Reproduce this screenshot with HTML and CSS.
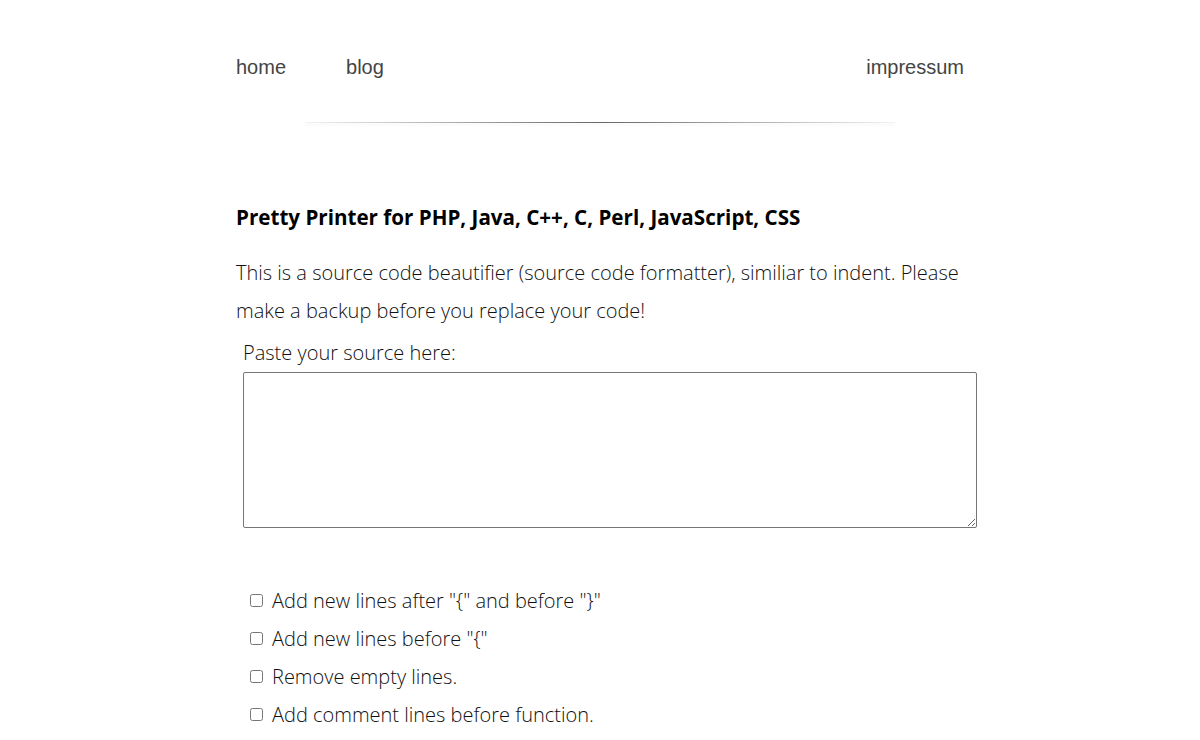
FILE: index.html
```html
<!DOCTYPE html>
<html>
<head>
<meta charset="utf-8">
<link rel="stylesheet" href="styles.css">
</head>
<body>
<div class="wrap">
  <nav class="nav">
    <div class="nav-left">
      <a href="#" class="nav-link">home</a>
      <a href="#" class="nav-link">blog</a>
    </div>
    <a href="#" class="nav-link">impressum</a>
  </nav>
  <div class="divider"></div>
  <main class="content">
    <h1 class="title">Pretty Printer for PHP, Java, C++, C, Perl, JavaScript, CSS</h1>
    <p class="intro">This is a source code beautifier (source code formatter), similiar to indent. Please make a backup before you replace your code!</p>
    <form class="form">
      <label class="paste-label">Paste your source here:</label>
      <textarea class="source"></textarea>
      <div class="options">
        <label class="option"><input type="checkbox" class="check"> Add new lines after "{" and before "}"</label>
        <label class="option"><input type="checkbox" class="check"> Add new lines before "{"</label>
        <label class="option"><input type="checkbox" class="check"> Remove empty lines.</label>
        <label class="option"><input type="checkbox" class="check"> Add comment lines before function.</label>
      </div>
    </form>
  </main>
</div>
</body>
</html>
```

FILE: styles.css
```css
html, body {
  margin: 0;
  padding: 0;
  background: #fff;
}
body {
  font-family: "Open Sans", "Noto Sans", sans-serif;
  font-weight: 300;
  color: #111;
}
.wrap {
  width: 728px;
  margin: 0 auto;
  padding-top: 54px;
}
.nav {
  display: flex;
  justify-content: space-between;
  align-items: center;
  height: 26px;
}
.nav-left {
  display: flex;
  gap: 60px;
}
.nav-link {
  font-family: "Liberation Sans", Arial, sans-serif;
  font-weight: 400;
  font-size: 20px;
  color: #444;
  text-decoration: none;
}
.divider {
  width: 590px;
  height: 1px;
  margin: 42px auto 0;
  background: linear-gradient(to right, rgba(0,0,0,0.05), rgba(0,0,0,0.6) 50%, rgba(0,0,0,0.05));
  box-shadow: 0 2px 3px rgba(0,0,0,0.06);
}
.content {
  padding-top: 81px;
}
.title {
  font-family: "Open Sans", sans-serif;
  font-weight: 700;
  font-size: 20.6px;
  margin: 0;
  line-height: 26px;
  color: #000;
}
.intro {
  font-size: 20px;
  line-height: 38px;
  margin: 24px 0 0;
}
.form {
  margin: 0;
}
.paste-label {
  display: block;
  font-size: 20px;
  line-height: 26px;
  margin: 10px 0 0 7px;
}
.source {
  display: block;
  box-sizing: border-box;
  width: 734px;
  height: 156px;
  margin: 6px 0 0 7px;
  border: 1px solid #767676;
  border-radius: 2px;
  padding: 2px;
  resize: vertical;
}
.options {
  display: flex;
  flex-direction: column;
  margin-top: 53px;
  padding-left: 14px;
}
.option {
  display: flex;
  align-items: center;
  height: 38px;
  font-size: 20px;
}
.check {
  width: 13px;
  height: 13px;
  margin: 0 9px 0 0;
}
```
